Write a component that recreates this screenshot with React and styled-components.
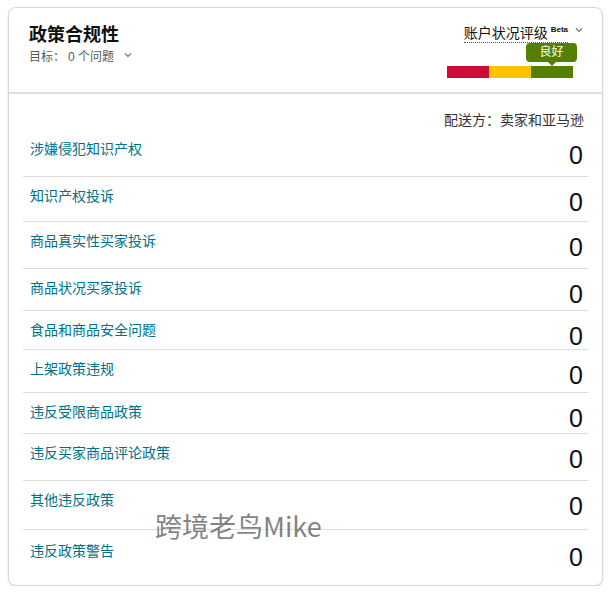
import React from "react";
import styled, { createGlobalStyle } from "styled-components";

const GlobalStyle = createGlobalStyle`
  html, body {
    margin: 0;
    padding: 0;
    background: #fff;
  }
  body {
    font-family: "Liberation Sans", "Noto Sans CJK SC", sans-serif;
    color: #0f1111;
  }
  * {
    box-sizing: border-box;
  }
`;

const rows = [
  { label: "涉嫌侵犯知识产权", count: 0, height: 47 },
  { label: "知识产权投诉", count: 0, height: 45 },
  { label: "商品真实性买家投诉", count: 0, height: 47 },
  { label: "商品状况买家投诉", count: 0, height: 42 },
  { label: "食品和商品安全问题", count: 0, height: 39 },
  { label: "上架政策违规", count: 0, height: 43 },
  { label: "违反受限商品政策", count: 0, height: 41 },
  { label: "违反买家商品评论政策", count: 0, height: 47 },
  { label: "其他违反政策", count: 0, height: 49 },
];

function Chevron() {
  return (
    <svg width="8" height="6" viewBox="0 0 8 6">
      <polyline
        points="1,1.5 4,4.5 7,1.5"
        fill="none"
        stroke="#6f7373"
        strokeWidth="1.1"
      />
    </svg>
  );
}

function App() {
  return (
    <Page>
      <GlobalStyle />
      <Card>
        <Header>
          <HeaderLeft>
            <Title>政策合规性</Title>
            <Target>
              <span>目标：</span>
              <TargetValue>0 个问题</TargetValue>
              <Chevron />
            </Target>
          </HeaderLeft>
          <HeaderRight>
            <RatingRow>
              <RatingLabel>
                账户状况评级<Beta>Beta</Beta>
              </RatingLabel>
              <Chevron />
            </RatingRow>
            <Pill>良好</Pill>
            <Meter>
              <Segment color="#cc0c39" />
              <Segment color="#ffc200" />
              <Segment color="#538000" />
            </Meter>
          </HeaderRight>
        </Header>

        <Body>
          <Fulfilled>配送方：卖家和亚马逊</Fulfilled>
          {rows.map((row) => (
            <Row key={row.label} style={{ height: row.height }}>
              <Label>{row.label}</Label>
              <Count>{row.count}</Count>
            </Row>
          ))}
        </Body>

        <LastRow>
          <Label>违反政策警告</Label>
          <Count>0</Count>
        </LastRow>

        <Watermark>跨境老鸟Mike</Watermark>
      </Card>
    </Page>
  );
}

const Page = styled.div`
  padding: 7px 6px 0 8px;
`;

const Card = styled.div`
  position: relative;
  width: 595px;
  height: 579px;
  border: 1px solid #d5d9d9;
  border-radius: 8px;
  box-shadow: 0 1px 2px rgba(15, 17, 17, 0.15);
  overflow: hidden;
  background: #fff;
`;

const Header = styled.div`
  display: flex;
  justify-content: space-between;
  height: 86px;
  padding: 15px 20px 0 20px;
  border-bottom: 2px solid #dcdfdf;
`;

const HeaderLeft = styled.div`
  display: flex;
  flex-direction: column;
`;

const Title = styled.div`
  font-size: 18px;
  font-weight: 700;
  line-height: 24px;
  color: #0f1111;
`;

const Target = styled.div`
  display: flex;
  align-items: center;
  margin-top: 1px;
  font-size: 12px;
  line-height: 18px;
  color: #565959;

  svg {
    margin-left: 10px;
    margin-top: -4px;
  }
`;

const TargetValue = styled.span`
  margin-left: 3px;
`;

const HeaderRight = styled.div`
  display: flex;
  flex-direction: column;
  align-items: flex-end;
`;

const RatingRow = styled.div`
  display: flex;
  align-items: center;
  gap: 7px;
  height: 20px;
  margin-right: -1px;

  svg {
    margin-top: -6px;
  }
`;

const RatingLabel = styled.span`
  font-size: 14px;
  line-height: 18px;
  color: #0f1111;
  border-bottom: 1px dotted #565959;
`;

const Beta = styled.sup`
  font-size: 8px;
  font-weight: 700;
  margin-left: 3px;
  vertical-align: 6px;
  line-height: 0;
`;

const Pill = styled.div`
  position: relative;
  width: 51px;
  height: 19px;
  margin-right: 5px;
  border-radius: 4px;
  background: #538000;
  color: #fff;
  font-size: 12px;
  line-height: 19px;
  text-align: center;

  &::after {
    content: "";
    position: absolute;
    left: 50%;
    bottom: -4px;
    margin-left: -4px;
    border-left: 4px solid transparent;
    border-right: 4px solid transparent;
    border-top: 4px solid #538000;
  }
`;

const Meter = styled.div`
  display: flex;
  margin-top: 4px;
  margin-right: 9px;
`;

const Segment = styled.div`
  width: 42px;
  height: 12px;
  background: ${(p) => p.color};
`;

const Body = styled.div`
  padding: 16px 13px 0 14px;
`;

const Fulfilled = styled.div`
  text-align: right;
  font-size: 14px;
  line-height: 20px;
  padding-right: 5px;
  color: #333;
`;

const Row = styled.div`
  display: flex;
  justify-content: space-between;
  align-items: flex-start;
  padding: 0 6px 0 7px;
  border-bottom: 1px solid #dcdfdf;
`;

const LastRow = styled.div`
  display: flex;
  justify-content: space-between;
  align-items: flex-start;
  padding: 2px 19px 0 21px;
`;

const Label = styled.div`
  padding-top: 9px;
  font-size: 14px;
  line-height: 20px;
  color: #007185;
`;

const Count = styled.div`
  padding-top: 13px;
  font-size: 25px;
  line-height: 25px;
  color: #0f1111;
`;

const Watermark = styled.div`
  position: absolute;
  left: 146px;
  top: 500px;
  font-family: "Noto Sans CJK SC", "Noto Sans", sans-serif;
  font-size: 27px;
  line-height: 36px;
  color: rgba(90, 90, 90, 0.75);
  pointer-events: none;
`;

export default App;
